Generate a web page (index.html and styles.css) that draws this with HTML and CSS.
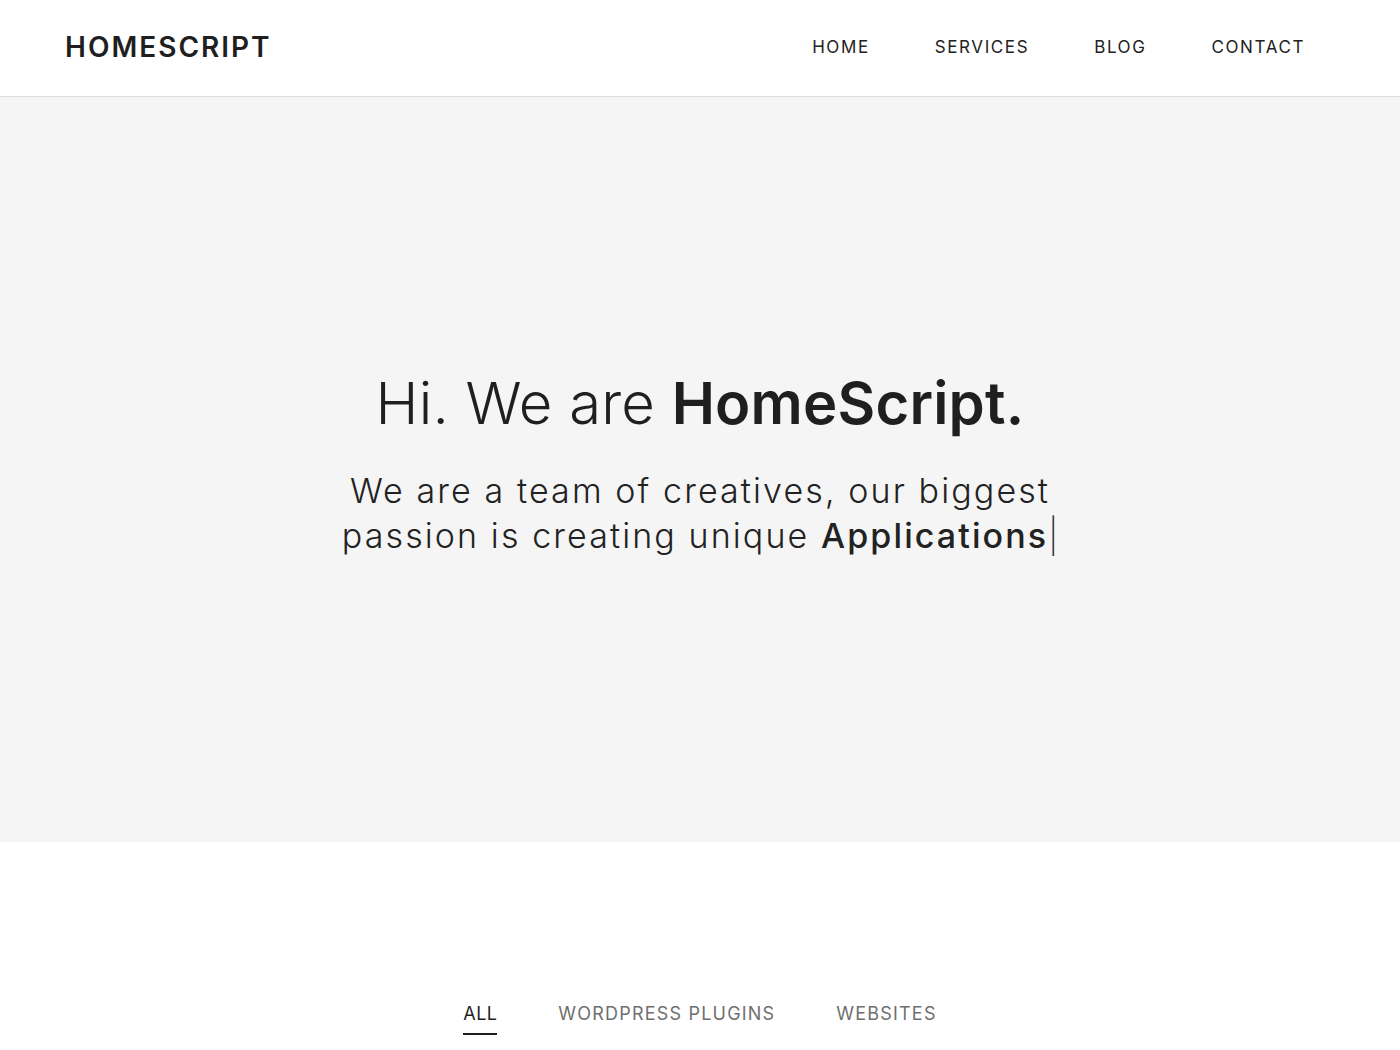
FILE: index.html
```html
<!DOCTYPE html>
<html lang="en">
<head>
<meta charset="utf-8">
<title>HomeScript</title>
<link rel="stylesheet" href="styles.css">
</head>
<body>
<header class="site-header">
  <a class="logo" href="#">HOMESCRIPT</a>
  <nav class="main-nav">
    <a href="#">HOME</a>
    <a href="#">SERVICES</a>
    <a href="#">BLOG</a>
    <a href="#">CONTACT</a>
  </nav>
</header>
<section class="hero">
  <h1 class="hero-title"><span class="light">Hi. We are </span><strong>HomeScript.</strong></h1>
  <p class="hero-sub">We are a team of creatives, our biggest<br>passion is creating unique <strong>Applications</strong><span class="cursor">|</span></p>
</section>
<section class="portfolio">
  <ul class="filters">
    <li class="active">ALL</li>
    <li>WORDPRESS PLUGINS</li>
    <li>WEBSITES</li>
  </ul>
</section>
</body>
</html>
```
FILE: styles.css
```css
* { box-sizing: border-box; }
html, body { margin: 0; padding: 0; }
body {
  font-family: "Inter", "Open Sans", sans-serif;
  color: #222;
  background: #fff;
}
a { color: inherit; text-decoration: none; }

.site-header {
  height: 97px;
  border-bottom: 1px solid #dedede;
  display: flex;
  align-items: center;
  justify-content: space-between;
  padding: 0 95px 2px 65px;
}
.logo {
  font-size: 28px;
  font-weight: 600;
  letter-spacing: 2px;
  color: #1f1f1f;
}
.main-nav {
  display: flex;
  gap: 65px;
}
.main-nav a {
  font-size: 17px;
  font-weight: 400;
  letter-spacing: 1.6px;
  color: #222;
}

.hero {
  background: #f5f5f5;
  height: 745px;
  display: flex;
  flex-direction: column;
  align-items: center;
  justify-content: center;
  text-align: center;
  padding-bottom: 14px;
}
.hero-title {
  margin: 0;
  font-size: 58px;
  line-height: 70px;
  font-weight: 600;
  letter-spacing: 0.2px;
  color: #1f1f1f;
}
.hero-title .light { font-weight: 300; }
.hero-title strong { font-weight: 600; }
.hero-sub {
  margin: 30px 0 0;
  font-size: 34px;
  line-height: 45px;
  font-weight: 300;
  letter-spacing: 2.1px;
  color: #222;
}
.hero-sub strong { font-weight: 500; }
.cursor { font-weight: 200; letter-spacing: 0; }

.portfolio {
  padding-top: 161px;
}
.filters {
  list-style: none;
  margin: 0;
  padding: 0;
  display: flex;
  justify-content: center;
  gap: 61px;
}
.filters li {
  font-size: 18px;
  letter-spacing: 1.2px;
  color: #6f6f6f;
  padding-bottom: 9px;
  border-bottom: 2px solid transparent;
}
.filters li.active {
  color: #1f1f1f;
  letter-spacing: 0.4px;
  border-bottom-color: #1f1f1f;
}
```
